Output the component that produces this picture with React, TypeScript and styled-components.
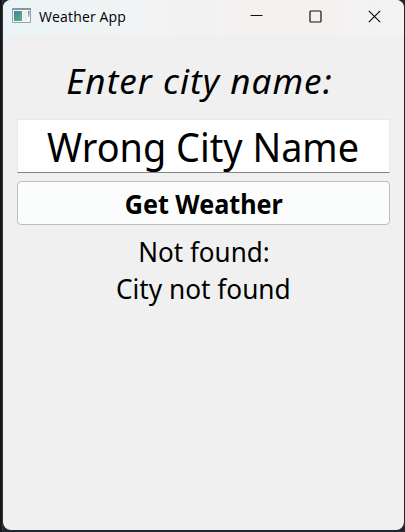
import React from 'react';
import styled, { createGlobalStyle } from 'styled-components';

const GlobalStyle = createGlobalStyle`
  * { box-sizing: border-box; }
  html, body { margin: 0; height: 100%; background: #1d1e23; overflow: hidden; }
`;

const Desktop = styled.div`
  width: 405px;
  height: 532px;
  padding: 0 1px 2px 3px;
  background: linear-gradient(90deg, #17181d 0 2px, #35363b 2px 3px, #24252a 3px);
`;

const Window = styled.main`
  display: flex;
  flex-direction: column;
  width: 401px;
  height: 530px;
  overflow: hidden;
  background: #f0f0f0;
  border-radius: 8px;
  color: #000;
`;

const TitleBar = styled.header`
  display: flex;
  align-items: center;
  flex: none;
  height: 35px;
  padding: 0 23px 3px 9px;
  background: linear-gradient(90deg, #eaf4f6 0, #f2f3f4 35%, #f5f1f0 68%, #f3f3f3 100%);
`;

const Title = styled.h1`
  margin: 1px auto 0 7px;
  font: 400 14px/20px 'Open Sans', 'Noto Sans', sans-serif;
  letter-spacing: 0.15px;
  white-space: nowrap;
`;

const Controls = styled.div`
  display: flex;
  gap: 46px;
`;

const Glyph = styled.svg`
  display: block;
  width: 13px;
  height: 13px;
  fill: none;
  stroke: #111;
  stroke-width: 1.2;
`;

const Form = styled.section`
  display: flex;
  flex-direction: column;
  padding: 10px 14px 0;
`;

const Line = styled.span<{ $stretch?: number }>`
  display: inline-block;
  white-space: pre;
  transform: scaleX(${p => p.$stretch ?? 1});
`;

const Label = styled.label`
  height: 74px;
  padding-right: 8px;
  text-align: center;
  font: italic 400 35px/72px 'Noto Sans', sans-serif;
  letter-spacing: 1.05px;
`;

const Field = styled.div`
  display: flex;
  justify-content: center;
  height: 54px;
  font: 400 40px/53px 'Noto Sans', sans-serif;
  background: #fff;
  border: 1px solid #e9e9e9;
  border-bottom-color: #868686;
`;

const Button = styled.button`
  height: 44px;
  margin-top: 8px;
  padding: 1px 0 0;
  color: #000;
  font: 700 26px/42px 'Noto Sans', sans-serif;
  background: #fbfdfc;
  border: 1px solid #babec2;
  border-radius: 4px;
`;

const Result = styled.output`
  display: flex;
  flex-direction: column;
  align-items: center;
  margin-top: 9px;
  font: 400 26.5px/37px 'Noto Sans', sans-serif;
`;

export default function App() {
  return (
    <>
      <GlobalStyle />
      <Desktop>
        <Window>
          <TitleBar>
            <svg width="20" height="16" viewBox="0 0 20 16">
              <defs>
                <linearGradient id="screen" x1="0" y1="0" x2="1" y2="1">
                  <stop stopColor="#417fa5" />
                  <stop offset="1" stopColor="#58b57c" />
                </linearGradient>
                <linearGradient id="meter" x1="0" y1="0" x2="0" y2="1">
                  <stop stopColor="#437bb5" />
                  <stop offset="1" stopColor="#9bd7a3" />
                </linearGradient>
              </defs>
              <path d="M.5.5h18v14H.5z" fill="#f8f9fa" stroke="#9a9fa8" />
              <path d="M0 1h19" stroke="#8d949e" strokeWidth="2" />
              <path d="M2 3h8v10H2z" fill="url(#screen)" />
              <path d="M11 3h4v10h-4z" fill="#ededed" />
              <path d="M16 3h1.5v6H16z" fill="url(#meter)" />
            </svg>
            <Title>Weather App</Title>
            <Controls>
              <Glyph viewBox="0 0 13 13"><path d="M.5 5.5h12" /></Glyph>
              <Glyph viewBox="0 0 13 13"><rect x="1" y="1" width="11" height="11" rx="1" /></Glyph>
              <Glyph viewBox="0 0 13 13"><path d="M.8.8l11.4 11.4M12.2.8L.8 12.2" /></Glyph>
            </Controls>
          </TitleBar>
          <Form>
            <Label><Line>Enter city name:</Line></Label>
            <Field><Line $stretch={0.945}>Wrong City Name</Line></Field>
            <Button><Line $stretch={0.967}>Get Weather</Line></Button>
            <Result>
              <Line $stretch={0.982}>Not found:</Line>
              <Line $stretch={0.989}>City not found</Line>
            </Result>
          </Form>
        </Window>
      </Desktop>
    </>
  );
}
